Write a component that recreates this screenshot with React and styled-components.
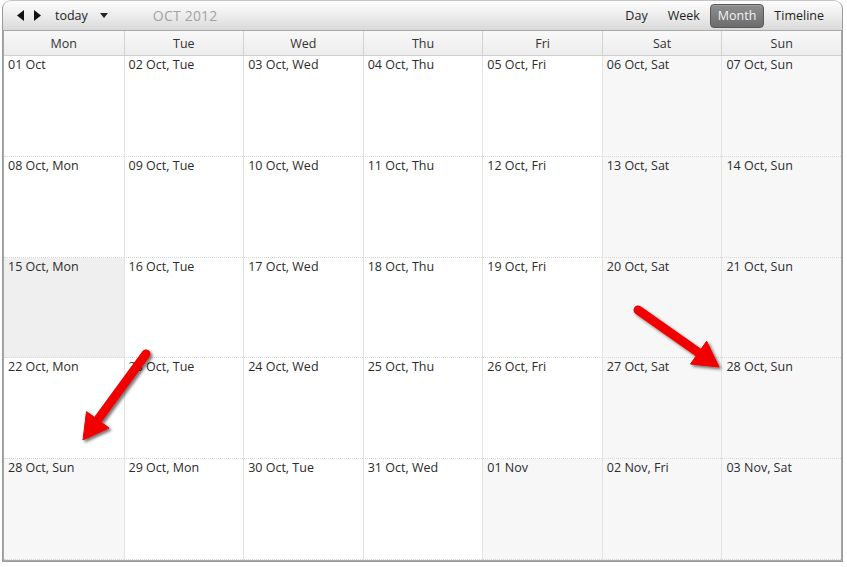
import React from "react";
import styled, { createGlobalStyle } from "styled-components";

const GlobalStyle = createGlobalStyle`
    html, body {
        margin: 0;
        padding: 0;
        background: #ffffff;
    }
    body {
        font-family: "Open Sans", "Liberation Sans", sans-serif;
        font-size: 12.5px;
        color: #2b2b2b;
    }
`;

const Page = styled.div`
    position: relative;
    width: 847px;
    height: 567px;
    padding: 0 4px 0 2px;
    box-sizing: border-box;
`;

const Frame = styled.div`
    width: 841px;
    height: 562px;
    box-sizing: border-box;
    border: 1px solid #9a9a9a;
    border-top-color: #c4c4c4;
    border-radius: 9px 9px 0 0;
    box-shadow: inset 1px 0 0 #a8a8a8, inset -1px 0 0 #a8a8a8, inset 0 -1px 0 #a8a8a8;
    overflow: hidden;
    display: flex;
    flex-direction: column;
`;

const Toolbar = styled.div`
    height: 30px;
    flex: 0 0 30px;
    display: flex;
    align-items: center;
    justify-content: space-between;
    background: linear-gradient(#fdfdfd, #e9e9e9 60%, #d9d9d9);
    border-bottom: 1px solid #a9a9a9;
    box-sizing: border-box;
    padding: 0 8px 0 14px;
`;

const Left = styled.div`
    display: flex;
    align-items: center;
`;

const NavArrows = styled.div`
    display: flex;
    gap: 10px;
    align-items: center;
    margin-right: 14px;
`;

const TodayLabel = styled.span`
    font-size: 12.5px;
    color: #222;
`;

const Caret = styled.span`
    display: inline-block;
    margin-left: 12px;
    width: 0;
    height: 0;
    border-left: 4px solid transparent;
    border-right: 4px solid transparent;
    border-top: 5px solid #222;
`;

const Title = styled.span`
    margin-left: 45px;
    font-size: 14px;
    color: #a3a3a3;
    letter-spacing: 0.2px;
`;

const ViewButtons = styled.div`
    display: flex;
    align-items: center;
`;

const ViewButton = styled.div`
    height: 24px;
    padding: 0 ${(p) => (p.$active ? "7px" : "9px")};
    display: flex;
    align-items: center;
    box-sizing: border-box;
    border-radius: 4px;
    font-size: 12.5px;
    color: ${(p) => (p.$active ? "#f4f4f4" : "#1f1f1f")};
    background: ${(p) => (p.$active ? "linear-gradient(#8e8e8e, #6c6c6c)" : "transparent")};
    border: 1px solid ${(p) => (p.$active ? "#585858" : "transparent")};
    box-shadow: ${(p) => (p.$active ? "inset 0 1px 0 #a0a0a0" : "none")};
`;

const HeaderRow = styled.div`
    display: grid;
    grid-template-columns: repeat(7, 1fr);
    height: 25px;
    flex: 0 0 25px;
    background: linear-gradient(#f9f9f9, #ececec);
    border-bottom: 1px solid #cfcfcf;
    box-sizing: border-box;
    margin: 0 1px;
`;

const HeaderCell = styled.div`
    display: flex;
    align-items: center;
    justify-content: center;
    font-size: 12.5px;
    color: #333;
    border-left: ${(p) => (p.$first ? "none" : "1px solid #d2d2d2")};
`;

const Body = styled.div`
    flex: 1;
    display: grid;
    grid-template-columns: repeat(7, 1fr);
    grid-template-rows: repeat(5, 1fr);
    margin: 0 1px 1px 1px;
`;

const Cell = styled.div`
    background: ${(p) => (p.$today ? "#efefef" : p.$muted ? "#f7f7f7" : "#ffffff")};
    border-left: ${(p) => (p.$first ? "none" : "1px solid #e4e4e4")};
    border-bottom: 1px dotted #d6d6d6;
    padding: 1px 4px;
    font-size: 12.5px;
    line-height: 16px;
    color: #2b2b2b;
    white-space: nowrap;
    overflow: hidden;
`;

const Overlay = styled.svg`
    position: absolute;
    left: 0;
    top: 0;
    pointer-events: none;
`;

const days = ["Mon", "Tue", "Wed", "Thu", "Fri", "Sat", "Sun"];

const rows = [
    ["01 Oct", "02 Oct, Tue", "03 Oct, Wed", "04 Oct, Thu", "05 Oct, Fri", "06 Oct, Sat", "07 Oct, Sun"],
    ["08 Oct, Mon", "09 Oct, Tue", "10 Oct, Wed", "11 Oct, Thu", "12 Oct, Fri", "13 Oct, Sat", "14 Oct, Sun"],
    ["15 Oct, Mon", "16 Oct, Tue", "17 Oct, Wed", "18 Oct, Thu", "19 Oct, Fri", "20 Oct, Sat", "21 Oct, Sun"],
    ["22 Oct, Mon", "23 Oct, Tue", "24 Oct, Wed", "25 Oct, Thu", "26 Oct, Fri", "27 Oct, Sat", "28 Oct, Sun"],
    ["28 Oct, Sun", "29 Oct, Mon", "30 Oct, Tue", "31 Oct, Wed", "01 Nov", "02 Nov, Fri", "03 Nov, Sat"],
];

const isMuted = (r, c) => c >= 5 || (r === 4 && (c === 0 || c === 4));

// arrow from tail to tip, thick shaft + triangular head
const Arrow = ({ tail, tip }) => {
    const [x1, y1] = tail;
    const [x2, y2] = tip;
    const dx = x2 - x1;
    const dy = y2 - y1;
    const len = Math.sqrt(dx * dx + dy * dy);
    const ux = dx / len;
    const uy = dy / len;
    const headLen = 25;
    const headHalf = 14;
    const bx = x2 - ux * headLen;
    const by = y2 - uy * headLen;
    const px = -uy;
    const py = ux;
    const head = `${x2},${y2} ${bx + px * headHalf},${by + py * headHalf} ${bx - px * headHalf},${by - py * headHalf}`;
    return (
        <g filter="url(#arrowShadow)">
            <line x1={x1} y1={y1} x2={bx + ux * 2} y2={by + uy * 2} stroke="#f00000" strokeWidth="9" strokeLinecap="round" />
            <polygon points={head} fill="#f00000" strokeLinejoin="round" stroke="#f00000" strokeWidth="1" />
        </g>
    );
};

const App = () => {
    return (
        <Page>
            <GlobalStyle />
            <Frame>
                <Toolbar>
                    <Left>
                        <NavArrows>
                            <svg width="7" height="11" viewBox="0 0 7 11">
                                <polygon points="7,0 7,11 0,5.5" fill="#111" />
                            </svg>
                            <svg width="7" height="11" viewBox="0 0 7 11">
                                <polygon points="0,0 0,11 7,5.5" fill="#111" />
                            </svg>
                        </NavArrows>
                        <TodayLabel>today</TodayLabel>
                        <Caret />
                        <Title>OCT 2012</Title>
                    </Left>
                    <ViewButtons>
                        <ViewButton>Day</ViewButton>
                        <ViewButton>Week</ViewButton>
                        <ViewButton $active>Month</ViewButton>
                        <ViewButton>Timeline</ViewButton>
                    </ViewButtons>
                </Toolbar>
                <HeaderRow>
                    {days.map((d, i) => (
                        <HeaderCell key={d} $first={i === 0}>
                            {d}
                        </HeaderCell>
                    ))}
                </HeaderRow>
                <Body>
                    {rows.map((row, r) =>
                        row.map((label, c) => (
                            <Cell key={`${r}-${c}`} $first={c === 0} $muted={isMuted(r, c)} $today={r === 2 && c === 0}>
                                {label}
                            </Cell>
                        ))
                    )}
                </Body>
            </Frame>
            <Overlay width="847" height="567">
                <defs>
                    <filter id="arrowShadow" x="-30%" y="-30%" width="160%" height="160%">
                        <feDropShadow dx="2" dy="2" stdDeviation="1.6" floodColor="#000" floodOpacity="0.55" />
                    </filter>
                </defs>
                <Arrow tail={[146, 354]} tip={[83, 440]} />
                <Arrow tail={[638, 310]} tip={[719, 367]} />
            </Overlay>
        </Page>
    );
};

export default App;
